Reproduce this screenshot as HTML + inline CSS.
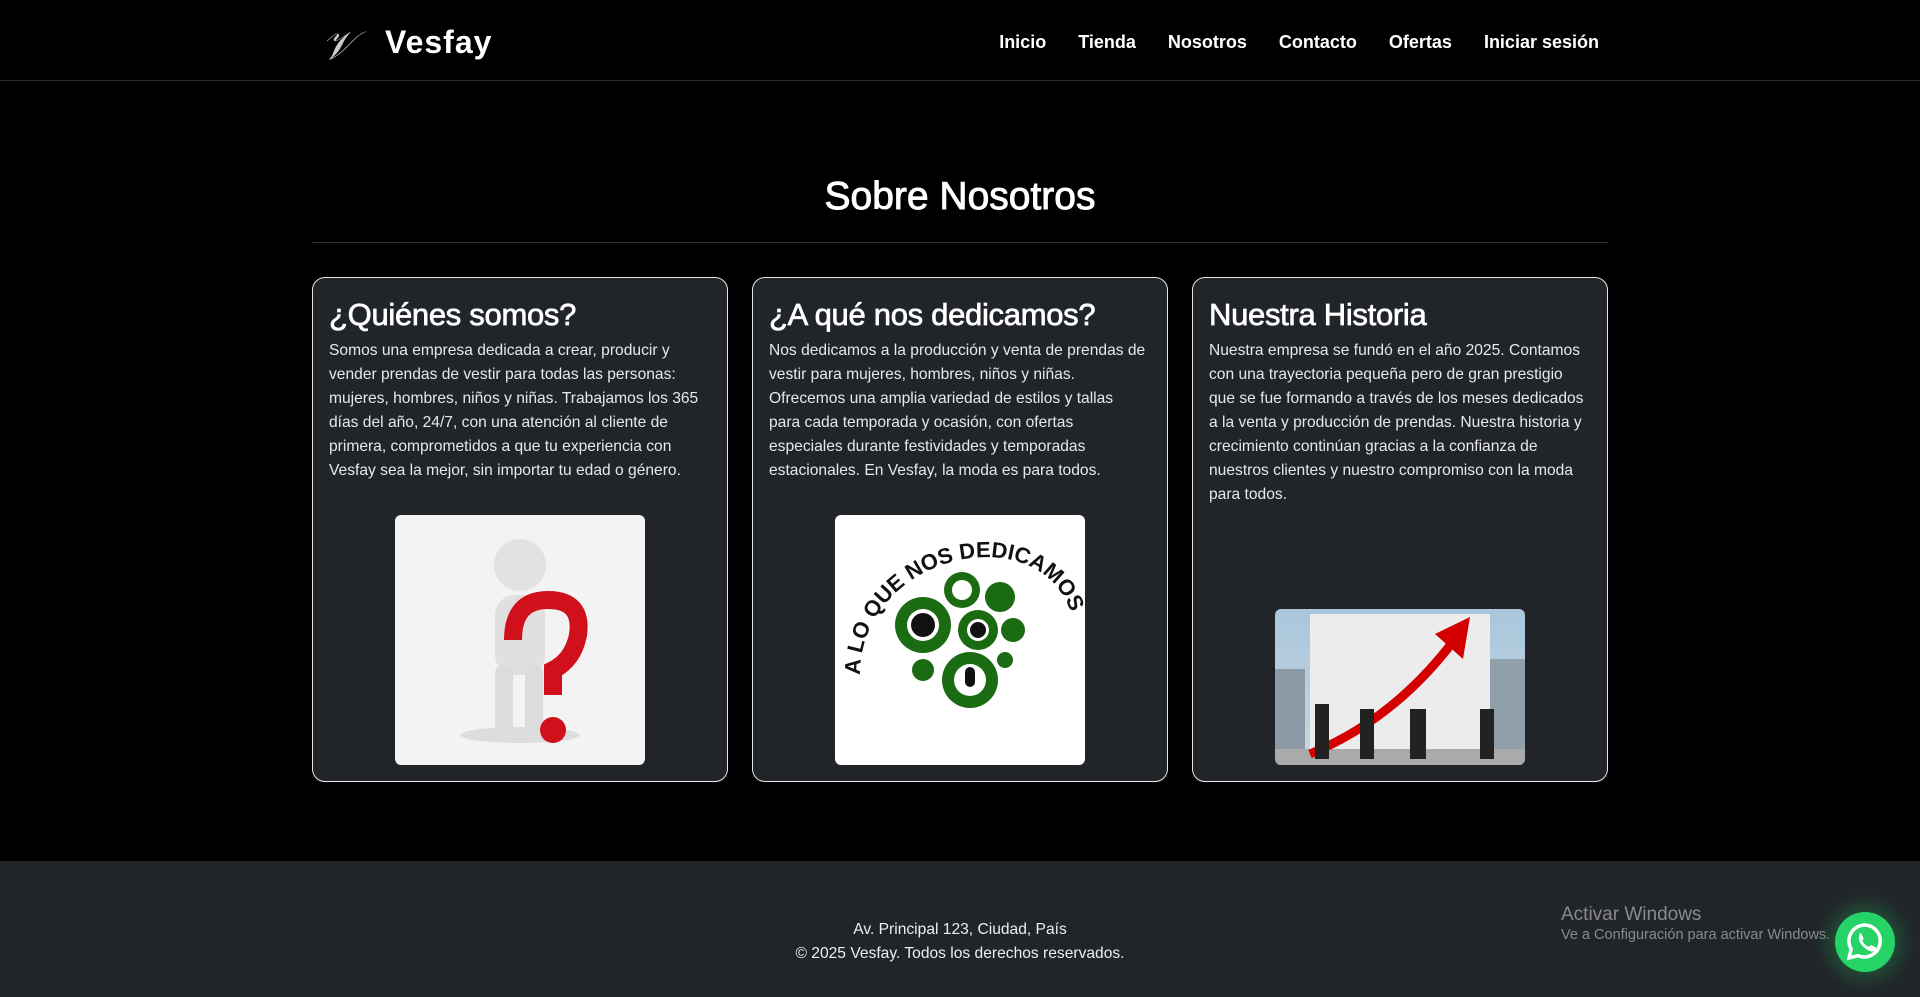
<!DOCTYPE html>
<html><head><meta charset="utf-8"><style>
*{box-sizing:border-box;margin:0;padding:0}
body{width:1920px;height:997px;background:#000;font-family:"Liberation Sans",sans-serif;color:#fff;overflow:hidden;position:relative}
header{height:81px;border-bottom:1px solid #2e2e2e;position:relative}
.logo{position:absolute;left:321px;top:22px;font-family:"Liberation Serif",serif;font-style:italic;font-size:40px;color:#ccc}
.brand{position:absolute;left:385px;top:24px;font-size:32px;font-weight:bold;letter-spacing:1px}
nav{position:absolute;right:321px;top:32px;font-size:18px;font-weight:bold}
nav span{margin-left:32px;color:#fff}
h1{position:absolute;top:175px;left:0;width:1920px;text-align:center;font-size:39px;font-weight:normal;-webkit-text-stroke:0.9px #fff}
.hr{position:absolute;top:242px;left:312px;width:1296px;height:1px;background:#333}
.card{position:absolute;top:277px;width:416px;height:505px;background:#212529;border:1px solid #e6e6e6;border-radius:13px;padding:19px 16px}
.card h2{font-size:31px;font-weight:normal;-webkit-text-stroke:0.7px #fff;margin-bottom:6px;letter-spacing:-0.3px}
.card p{font-size:15.6px;line-height:24px;color:#e8e8e8;padding-right:4px}
.img{position:absolute;left:82px;bottom:16px;width:250px;border-radius:6px;overflow:hidden}
footer{position:absolute;top:861px;left:0;width:1920px;height:136px;background:#212529;text-align:center;font-size:15.6px;line-height:24px;padding-top:57px;color:#eee}
.win{position:absolute;left:1561px;top:904px;color:#8a8a8a}
.wa{position:absolute;left:1835px;top:912px;width:60px;height:60px;border-radius:50%;background:#25d366;box-shadow:0 0 18px 8px rgba(37,211,102,.25)}
</style></head><body>
<header>
<div class="logo">𝒱</div>
<div class="brand">Vesfay</div>
<nav><span>Inicio</span><span>Tienda</span><span>Nosotros</span><span>Contacto</span><span>Ofertas</span><span>Iniciar sesión</span></nav>
</header>
<h1>Sobre Nosotros</h1>
<div class="hr"></div>

<div class="card" style="left:312px">
<h2>¿Quiénes somos?</h2>
<p>Somos una empresa dedicada a crear, producir y vender prendas de vestir para todas las personas: mujeres, hombres, niños y niñas. Trabajamos los 365 días del año, 24/7, con una atención al cliente de primera, comprometidos a que tu experiencia con Vesfay sea la mejor, sin importar tu edad o género.</p>
<div class="img" style="height:250px;background:#f3f3f3">
<svg width="250" height="250"><ellipse cx="125" cy="220" rx="60" ry="8" fill="#ddd"/><circle cx="125" cy="50" r="26" fill="#e2e2e2"/><rect x="100" y="80" width="50" height="80" rx="20" fill="#e0e0e0"/><rect x="100" y="150" width="18" height="70" rx="8" fill="#dcdcdc"/><rect x="130" y="150" width="18" height="70" rx="8" fill="#dcdcdc"/><path d="M118 125 q0-40 35-40 q35 0 30 35 q-5 25-25 35 v25" stroke="#d0101a" stroke-width="18" fill="none"/><circle cx="158" cy="215" r="13" fill="#d0101a"/></svg>
</div>
</div>

<div class="card" style="left:752px">
<h2>¿A qué nos dedicamos?</h2>
<p>Nos dedicamos a la producción y venta de prendas de vestir para mujeres, hombres, niños y niñas. Ofrecemos una amplia variedad de estilos y tallas para cada temporada y ocasión, con ofertas especiales durante festividades y temporadas estacionales. En Vesfay, la moda es para todos.</p>
<div class="img" style="height:250px;background:#fff">
<svg width="250" height="250"><defs><path id="arc" d="M25 160 C25 40 200 0 235 95"/></defs><text font-family="Liberation Sans" font-weight="bold" font-size="22" fill="#111"><textPath href="#arc">A LO QUE NOS DEDICAMOS</textPath></text>
<g fill="#1a6b12"><circle cx="88" cy="110" r="28"/><circle cx="127" cy="75" r="18"/><circle cx="165" cy="82" r="15"/><circle cx="143" cy="115" r="20"/><circle cx="178" cy="115" r="12"/><circle cx="88" cy="155" r="11"/><circle cx="170" cy="145" r="8"/><circle cx="135" cy="165" r="28"/></g>
<g fill="#fff"><circle cx="88" cy="110" r="16"/><circle cx="127" cy="75" r="10"/><circle cx="143" cy="115" r="11"/><circle cx="135" cy="165" r="16"/></g>
<g fill="#111"><circle cx="88" cy="110" r="12"/><circle cx="143" cy="115" r="8"/><rect x="130" y="152" width="10" height="20" rx="5"/></g></svg>
</div>
</div>

<div class="card" style="left:1192px">
<h2>Nuestra Historia</h2>
<p>Nuestra empresa se fundó en el año 2025. Contamos con una trayectoria pequeña pero de gran prestigio que se fue formando a través de los meses dedicados a la venta y producción de prendas. Nuestra historia y crecimiento continúan gracias a la confianza de nuestros clientes y nuestro compromiso con la moda para todos.</p>
<div class="img" style="height:156px;background:linear-gradient(#a9c6dc,#c9d6df)">
<svg width="250" height="156"><rect x="0" y="60" width="30" height="90" fill="#8b9aa6"/><rect x="215" y="50" width="35" height="100" fill="#8fa0ab"/><rect x="35" y="5" width="180" height="150" fill="#ececec"/><rect x="0" y="140" width="250" height="16" fill="#aaa"/><path d="M35 145 Q120 110 180 30" stroke="#d40000" stroke-width="9" fill="none"/><path d="M160 25 L195 8 L188 50 Z" fill="#d40000"/><g fill="#222"><rect x="40" y="95" width="14" height="55"/><rect x="85" y="100" width="14" height="50"/><rect x="135" y="100" width="16" height="50"/><rect x="205" y="100" width="14" height="50"/></g></svg>
</div>
</div>

<footer>Av. Principal 123, Ciudad, País<br>© 2025 Vesfay. Todos los derechos reservados.</footer>
<div class="win"><div style="font-size:19px">Activar Windows</div><div style="font-size:14.5px;margin-top:1px">Ve a Configuración para activar Windows.</div></div>
<div class="wa"><svg width="60" height="60" viewBox="0 0 60 60"><path d="M30 13a16 16 0 0 0-13.8 24.2L14 46l9-2.3A16 16 0 1 0 30 13z" fill="none" stroke="#fff" stroke-width="3.5"/><path d="M24 22c1-1 2-1 2.5 0l2 4c.3.7 0 1.3-.8 2-.5.5-.4 1 .2 2 1.3 2 3 3.5 5 4.5.8.4 1.3.3 1.8-.3 1-1.2 1.4-1.2 2.3-.8l3.6 1.8c.8.4.8 1 .3 2.2-.8 1.8-3 2.6-5 2-5-1.5-9-5.3-11.4-10-1-2.3-.8-5.2.5-7.4z" fill="#fff"/></svg></div>
</body></html>
